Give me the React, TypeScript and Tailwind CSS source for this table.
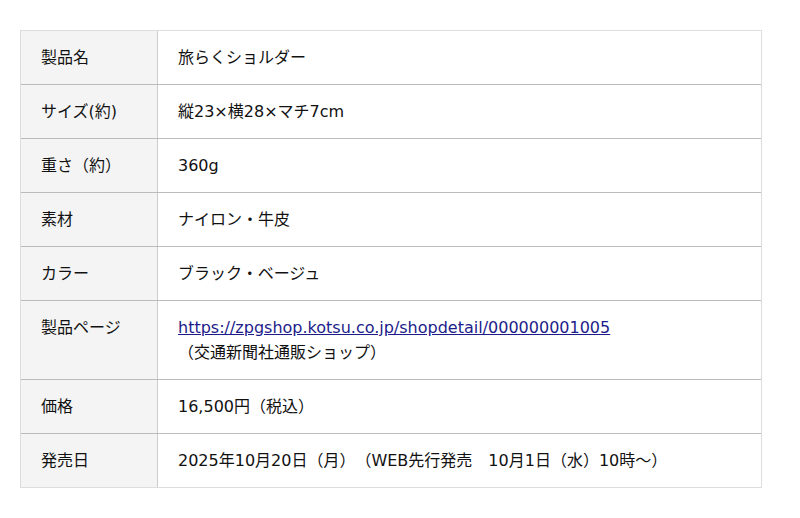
import React from 'react';

const rows: { label: string; value: React.ReactNode }[] = [
  { label: '製品名', value: '旅らくショルダー' },
  { label: 'サイズ(約)', value: '縦23×横28×マチ7cm' },
  { label: '重さ（約）', value: '360g' },
  { label: '素材', value: 'ナイロン・牛皮' },
  { label: 'カラー', value: 'ブラック・ベージュ' },
  {
    label: '製品ページ',
    value: (
      <>
        <a href="#" className="text-[#1c1c8a] underline">
          https://zpgshop.kotsu.co.jp/shopdetail/000000001005
        </a>
        <br />
        （交通新聞社通販ショップ）
      </>
    ),
  },
  { label: '価格', value: '16,500円（税込）' },
  { label: '発売日', value: '2025年10月20日（月）（WEB先行発売　10月1日（水）10時～）' },
];

export default function App() {
  return (
    <div
      className="bg-white px-5 pt-[30px] pb-[30px] text-[16px] leading-[25px] text-[#111] [text-spacing-trim:space-all]"
      style={{ fontFamily: '"DejaVu Sans", "Noto Sans CJK JP", sans-serif' }}
    >
      <div className="w-[742px] border border-[#ddd]">
        {rows.map((r, i) => (
          <div key={r.label} className={`flex ${i > 0 ? 'border-t border-[#bbb]' : ''}`}>
            <div className="w-[137px] shrink-0 border-r border-[#ccc] bg-[#f4f4f4] px-5 py-[14px]">{r.label}</div>
            <div className="flex-1 px-5 py-[14px]">{r.value}</div>
          </div>
        ))}
      </div>
    </div>
  );
}
